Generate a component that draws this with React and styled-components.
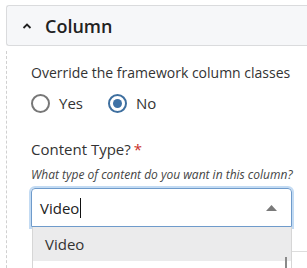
import React from 'react';
import styled, { createGlobalStyle } from 'styled-components';

const GlobalStyle = createGlobalStyle`
body {
  margin: 0;
  background: #ffffff;
  overflow: hidden;
  font-family: "Open Sans", "Noto Sans", sans-serif;
  color: #333333;
}
`

const Page = styled.div`
width: 340px;
padding: 5px 0 0 6px;
`

const PanelHeader = styled.div`
height: 39px;
display: flex;
align-items: center;
background: #f6f7f9;
border: 1px solid #dadbdd;
border-right: 0;
border-radius: 3px 0 0 3px;
padding-left: 15px;
`

const Chevron = styled.svg`
width: 10px;
height: 8px;
margin-right: 13px;
`

const Title = styled.span`
font-size: 18px;
font-weight: 600;
color: #222222;
`

const PanelBody = styled.div`
margin-top: 5px;
border-left: 1px dashed #d0d0d0;
padding: 12px 0 0 24px;
min-height: 230px;
`

const Label = styled.div`
font-size: 14px;
line-height: 20px;
color: #333333;
`

const Required = styled.span`
color: #c9302c;
margin-left: 3px;
`

const RadioRow = styled.div`
display: flex;
align-items: center;
margin-top: 10px;
gap: 25px;
`

const RadioOption = styled.label`
display: flex;
align-items: center;
gap: 9px;
font-size: 15px;
color: #333333;
`

const RadioCircle = styled.span`
width: 19px;
height: 19px;
box-sizing: border-box;
border-radius: 50%;
border: 2px solid ${p => (p.checked ? '#3e6f9f' : '#777777')};
display: flex;
align-items: center;
justify-content: center;
&::after {
  content: '';
  width: 9px;
  height: 9px;
  border-radius: 50%;
  background: ${p => (p.checked ? '#3e72a6' : 'transparent')};
}
`

const Field = styled.div`
margin-top: 26px;
`

const FieldLabel = styled(Label)`
font-size: 15px;
`

const Help = styled.div`
font-size: 12px;
font-style: italic;
color: #444444;
margin-top: 7px;
line-height: 18px;
`

const SelectWrap = styled.div`
position: relative;
margin-top: 4px;
width: 261px;
`

const SelectBox = styled.div`
height: 39px;
box-sizing: border-box;
border: 1px solid #6f9bcb;
border-radius: 4px 4px 0 0;
box-shadow: 0 0 0 2px #c3dbf3;
display: flex;
align-items: center;
padding: 0 14px 0 8px;
font-size: 15px;
color: #222222;
`

const Caret = styled.span`
display: inline-block;
width: 1px;
height: 20px;
background: #111111;
margin-left: 1px;
`

const Arrow = styled.svg`
margin-left: auto;
width: 11px;
height: 6px;
`

const Menu = styled.div`
position: absolute;
top: 39px;
left: 1px;
width: 258px;
height: 60px;
background: #ffffff;
border-left: 1px solid #d6d6d6;
border-right: 1px solid #d6d6d6;
z-index: 2;
`

const MenuItem = styled.div`
height: 34px;
display: flex;
align-items: center;
padding-left: 12px;
font-size: 15px;
color: #333333;
background: ${p => (p.active ? '#ebebec' : '#ffffff')};
`

const ScrollThumb = styled.div`
position: absolute;
right: 4px;
top: 30px;
width: 2px;
height: 30px;
background: #8a8a8a;
`

const NextBlock = styled.div`
margin-top: 24px;
margin-left: 200px;
border-top: 1px solid #dddddd;
height: 20px;
`

export default function App() {
  return (
    <Page>
      <GlobalStyle />
      <PanelHeader>
        <Chevron viewBox="0 0 10 8">
          <path d="M1.5 6 L5 2.5 L8.5 6" fill="none" stroke="#222" strokeWidth="1.8" />
        </Chevron>
        <Title>Column</Title>
      </PanelHeader>
      <PanelBody>
        <Label>Override the framework column classes</Label>
        <RadioRow>
          <RadioOption>
            <RadioCircle />
            Yes
          </RadioOption>
          <RadioOption>
            <RadioCircle checked />
            No
          </RadioOption>
        </RadioRow>
        <Field>
          <FieldLabel>
            Content Type?<Required>*</Required>
          </FieldLabel>
          <Help>What type of content do you want in this column?</Help>
          <SelectWrap>
            <SelectBox>
              Video<Caret />
              <Arrow viewBox="0 0 11 6">
                <path d="M0 6 L5.5 0 L11 6 Z" fill="#7a7a7a" />
              </Arrow>
            </SelectBox>
            <Menu>
              <MenuItem active>Video</MenuItem>
              <ScrollThumb />
            </Menu>
          </SelectWrap>
          <NextBlock />
        </Field>
      </PanelBody>
    </Page>
  );
}
